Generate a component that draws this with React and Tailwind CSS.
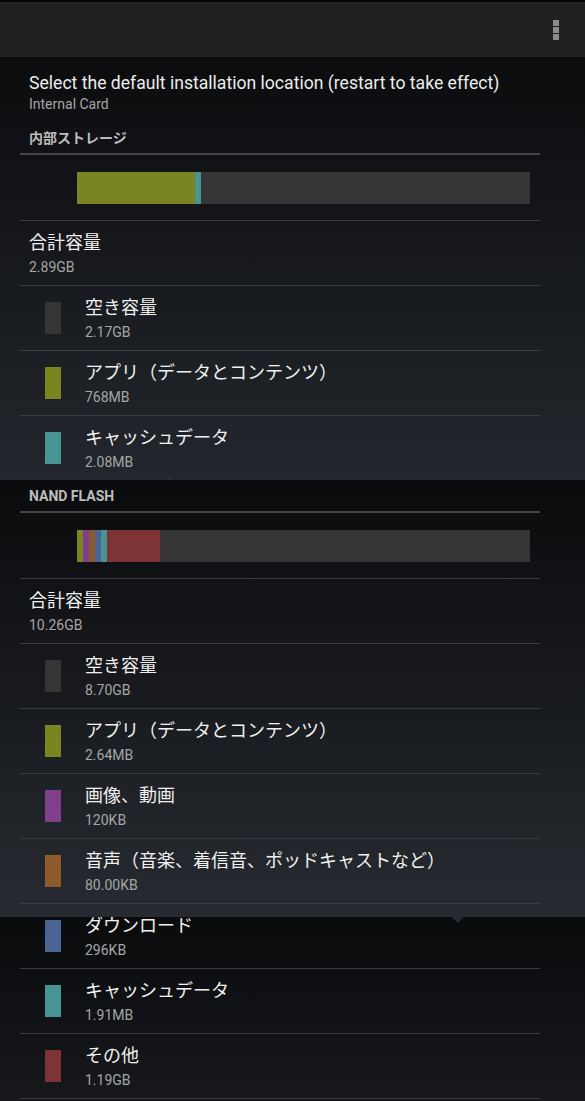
import React from "react";

// storage category colours (Android 4.x storage settings)
const C = {
  free: "bg-[#353535]",
  apps: "bg-[#7a8420]",
  dcim: "bg-[#7f3f8a]",
  music: "bg-[#8e5a2c]",
  downloads: "bg-[#4a6595]",
  cache: "bg-[#479494]",
  misc: "bg-[#7e3434]",
};

const Row = ({ color, title, size, className = "" }) => (
  <div className={`flex h-[65px] border-t border-[#383b40] ${className}`}>
    <div className={`ml-[25px] mt-[16px] h-[32px] w-[16px] shrink-0 ${color}`} />
    <div className="ml-[24px] pt-[11px]">
      <p className="text-[18px] leading-[22px] text-[#f0f0f0] whitespace-nowrap">{title}</p>
      <p className="mt-[3px] text-[14px] leading-[20px] text-[#a6a6a6]">{size}</p>
    </div>
  </div>
);

const Total = ({ size }) => (
  <div className="h-[65px] border-t border-[#383b40] pl-[9px] pt-[11px]">
    <p className="text-[18px] leading-[22px] text-[#f0f0f0]">合計容量</p>
    <p className="mt-[3px] text-[14px] leading-[20px] text-[#a6a6a6]">{size}</p>
  </div>
);

const Header = ({ children, className = "" }) => (
  <div
    className={`border-b-2 border-[#454545] pl-[9px] pb-[6px] text-[14px] font-bold leading-[18px] text-[#bdbdbd] ${className}`}
  >
    {children}
  </div>
);

const UsageBar = ({ segments, className = "" }) => (
  <div className={`ml-[57px] mr-[10px] flex h-[32px] bg-[#353535] ${className}`}>
    {segments.map((s, i) => (
      <div key={i} className={`h-full ${s}`} />
    ))}
  </div>
);

export default function App() {
  return (
    <div className="h-[1101px] w-[585px] overflow-hidden bg-[#0a0b0d] font-['Roboto','Noto_Sans_CJK_JP',sans-serif]">
      {/* ACTION BAR */}
      <header className="flex h-[57px] items-center justify-end border-t-2 border-[#050505] bg-[#212121] pr-[26px]">
        <div className="flex flex-col gap-[1px]">
          <span className="h-[6px] w-[6px] bg-[#8c8c8c]" />
          <span className="h-[6px] w-[6px] bg-[#8c8c8c]" />
          <span className="h-[6px] w-[6px] bg-[#8c8c8c]" />
        </div>
      </header>

      {/* PANEL 1 */}
      <section className="h-[423px] overflow-hidden bg-linear-to-b from-[#0b0c0e] to-[#23272d]">
        <div className="pl-[29px] pt-[15px]">
          <p className="text-[17.6px] leading-[22px] text-[#ececec]">
            Select the default installation location (restart to take effect)
          </p>
          <p className="mt-[1px] text-[14px] leading-[18px] text-[#a6a6a6]">Internal Card</p>
        </div>
        <div className="ml-[20px] w-[520px]">
          <Header className="mt-[16px]">内部ストレージ</Header>
          <UsageBar className="mt-[17px]" segments={["w-[118px] bg-[#7a8420]", "w-[6px] bg-[#479494]"]} />
          <div className="mt-[16px]">
            <Total size="2.89GB" />
            <Row color={C.free} title="空き容量" size="2.17GB" />
            <Row color={C.apps} title="アプリ（データとコンテンツ）" size="768MB" />
            <Row color={C.cache} title="キャッシュデータ" size="2.08MB" />
          </div>
        </div>
      </section>

      {/* PANEL 2 */}
      <section className="relative h-[437px] bg-linear-to-b from-[#0a0b0d] to-[#272b31]">
        <span className="absolute left-[167px] top-0 h-0 w-0 -translate-y-full border-b-[5px] border-l-[5px] border-b-[#2a2d33] border-l-transparent" />
        <div className="ml-[20px] w-[520px] pt-[7px]">
          <Header>NAND FLASH</Header>
          <UsageBar
            className="mt-[17px]"
            segments={[
              "w-[6px] bg-[#7a8420]",
              "w-[6px] bg-[#7f3f8a]",
              "w-[6px] bg-[#8e5a2c]",
              "w-[6px] bg-[#4a6595]",
              "w-[6px] bg-[#479494]",
              "w-[53px] bg-[#7e3434]",
            ]}
          />
          <div className="mt-[16px]">
            <Total size="10.26GB" />
            <Row color={C.free} title="空き容量" size="8.70GB" />
            <Row color={C.apps} title="アプリ（データとコンテンツ）" size="2.64MB" />
            <Row color={C.dcim} title="画像、動画" size="120KB" />
            <Row color={C.music} title="音声（音楽、着信音、ポッドキャストなど）" size="80.00KB" />
            <div className="border-t border-[#383b40]" />
          </div>
        </div>
        <span className="absolute bottom-0 left-[452px] h-0 w-0 translate-y-full border-x-[6px] border-t-[6px] border-x-transparent border-t-[#282c32]" />
      </section>

      {/* PANEL 3 */}
      <section className="h-[184px] overflow-hidden bg-linear-to-b from-[#0a0b0d] to-[#16181c]">
        <div className="ml-[20px] w-[520px]">
          <Row className="-mt-[14px]" color={C.downloads} title="ダウンロード" size="296KB" />
          <Row color={C.cache} title="キャッシュデータ" size="1.91MB" />
          <Row color={C.misc} title="その他" size="1.19GB" />
          <Row color={C.free} title="" size="" />
        </div>
      </section>
    </div>
  );
}
